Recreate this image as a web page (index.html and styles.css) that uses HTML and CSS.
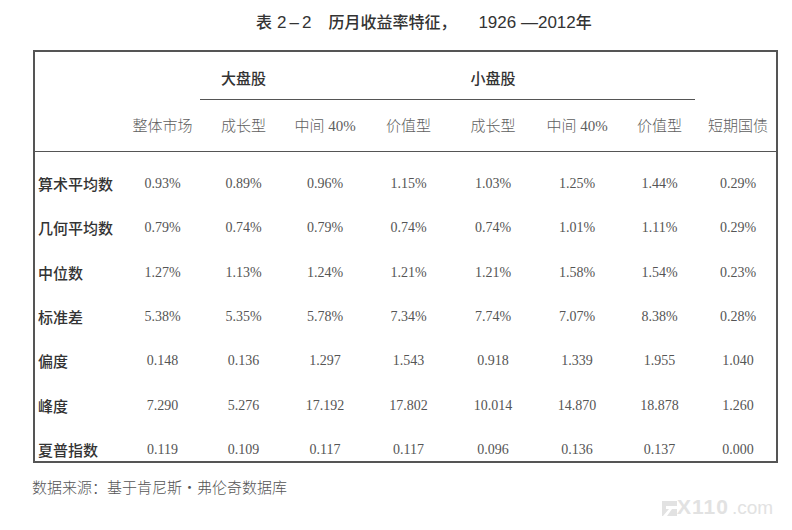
FILE: index.html
```html
<!DOCTYPE html>
<html lang="zh-CN">
<head>
<meta charset="utf-8">
<title>表 2-2 历月收益率特征</title>
<link rel="stylesheet" href="styles.css">
</head>
<body>
<div class="page">
  <h1 class="title"><span class="t-cn">表</span><span class="t-num t-no">2–2</span><span class="t-cn t-main">历月收益率特征，</span><span class="t-num t-yr">1926 —2012</span><span class="t-cn">年</span></h1>

  <div class="table">
    <div class="row group-row">
      <div class="group g-large">大盘股</div>
      <div class="group g-small">小盘股</div>
    </div>
    <div class="group-line"></div>
    <div class="row head-row">
      <div class="cell"></div>
      <div class="cell hd">整体市场</div>
      <div class="cell hd">成长型</div>
      <div class="cell hd">中间 40%</div>
      <div class="cell hd">价值型</div>
      <div class="cell hd">成长型</div>
      <div class="cell hd">中间 40%</div>
      <div class="cell hd">价值型</div>
      <div class="cell hd">短期国债</div>
    </div>
    <div class="body">
      <div class="row data-row">
        <div class="cell label">算术平均数</div>
        <div class="cell num">0.93%</div><div class="cell num">0.89%</div><div class="cell num">0.96%</div><div class="cell num">1.15%</div>
        <div class="cell num">1.03%</div><div class="cell num">1.25%</div><div class="cell num">1.44%</div><div class="cell num">0.29%</div>
      </div>
      <div class="row data-row">
        <div class="cell label">几何平均数</div>
        <div class="cell num">0.79%</div><div class="cell num">0.74%</div><div class="cell num">0.79%</div><div class="cell num">0.74%</div>
        <div class="cell num">0.74%</div><div class="cell num">1.01%</div><div class="cell num">1.11%</div><div class="cell num">0.29%</div>
      </div>
      <div class="row data-row">
        <div class="cell label">中位数</div>
        <div class="cell num">1.27%</div><div class="cell num">1.13%</div><div class="cell num">1.24%</div><div class="cell num">1.21%</div>
        <div class="cell num">1.21%</div><div class="cell num">1.58%</div><div class="cell num">1.54%</div><div class="cell num">0.23%</div>
      </div>
      <div class="row data-row">
        <div class="cell label">标准差</div>
        <div class="cell num">5.38%</div><div class="cell num">5.35%</div><div class="cell num">5.78%</div><div class="cell num">7.34%</div>
        <div class="cell num">7.74%</div><div class="cell num">7.07%</div><div class="cell num">8.38%</div><div class="cell num">0.28%</div>
      </div>
      <div class="row data-row">
        <div class="cell label">偏度</div>
        <div class="cell num">0.148</div><div class="cell num">0.136</div><div class="cell num">1.297</div><div class="cell num">1.543</div>
        <div class="cell num">0.918</div><div class="cell num">1.339</div><div class="cell num">1.955</div><div class="cell num">1.040</div>
      </div>
      <div class="row data-row">
        <div class="cell label">峰度</div>
        <div class="cell num">7.290</div><div class="cell num">5.276</div><div class="cell num">17.192</div><div class="cell num">17.802</div>
        <div class="cell num">10.014</div><div class="cell num">14.870</div><div class="cell num">18.878</div><div class="cell num">1.260</div>
      </div>
      <div class="row data-row last">
        <div class="cell label">夏普指数</div>
        <div class="cell num">0.119</div><div class="cell num">0.109</div><div class="cell num">0.117</div><div class="cell num">0.117</div>
        <div class="cell num">0.096</div><div class="cell num">0.136</div><div class="cell num">0.137</div><div class="cell num">0.000</div>
      </div>
    </div>
  </div>

  <p class="source">数据来源：基于肯尼斯・弗伦奇数据库</p>
</div>

<div class="watermark">
  <svg class="wm-f" width="15" height="15" viewBox="0 0 15 15" aria-hidden="true">
    <rect x="0" y="0" width="15" height="15" fill="#e2e2e2"/>
    <polygon points="4,5 15,5 15,8 10,8 5,15 1,15 7,8 4,8" fill="#ffffff"/>
  </svg>
  <span class="wm-x">X110</span><span class="wm-com">.com</span>
</div>
</body>
</html>
```

FILE: styles.css
```css
html, body {
  margin: 0;
  padding: 0;
}

body {
  width: 792px;
  height: 530px;
  background: #ffffff;
  position: relative;
  overflow: hidden;
  color: #333333;
  font-family: "Liberation Serif", "Noto Sans CJK SC", serif;
}

.page {
  padding: 10px 0 0 33px;
}

/* Title */
.title {
  margin: 0;
  padding-left: 223px;
  height: 22px;
  line-height: 22px;
  font-size: 16px;
  font-weight: normal;
  white-space: nowrap;
  color: #333333;
}

.t-cn {
  font-family: "Noto Sans CJK SC", sans-serif;
  font-weight: 500;
  font-size: 16px;
}

.t-num {
  font-family: "Liberation Sans", "Noto Sans CJK SC", sans-serif;
  font-size: 17px;
}

.t-no {
  margin-left: 5px;
  letter-spacing: 3px;
}

.t-main {
  margin-left: 14px;
}

.t-yr {
  margin-left: 22px;
}

/* Table */
.table {
  margin-top: 18px;
  width: 741px;
  border: 2px solid #555555;
}

.row {
  display: grid;
  grid-template-columns: 87px 81px 81px 82px 85px 84px 84px 81px 76px;
}

.group-row {
  box-sizing: border-box;
  height: 47px;
  padding-top: 4px;
  align-items: center;
}

.group {
  font-family: "Noto Sans CJK SC", sans-serif;
  font-weight: 500;
  font-size: 15px;
  color: #333333;
  text-align: center;
}

.g-large {
  grid-column: 3;
}

.g-small {
  grid-column: 6;
}

.group-line {
  margin-left: 165px;
  width: 495px;
  height: 1px;
  background: #555555;
}

.head-row {
  box-sizing: border-box;
  height: 52px;
  align-items: center;
  border-bottom: 1px solid #555555;
}

.hd {
  text-align: center;
  font-size: 15px;
  color: #5e5e5e;
  font-family: "Liberation Serif", "Noto Sans CJK SC", serif;
  font-weight: 300;
  white-space: nowrap;
}

.body {
  padding-top: 10px;
}

.data-row {
  height: 44.33px;
  align-items: start;
}

.data-row.last {
  height: 33px;
}

.cell {
  line-height: 20px;
}

.data-row .cell {
  padding-top: 12px;
}

.label {
  padding-left: 3px;
  font-family: "Noto Sans CJK SC", sans-serif;
  font-weight: 500;
  font-size: 15px;
  color: #333333;
  white-space: nowrap;
}

.num {
  text-align: center;
  font-family: "Liberation Serif", serif;
  font-size: 14px;
  color: #555555;
}

/* Source note */
.source {
  margin: 14px 0 0 -1px;
  line-height: 20px;
  font-size: 15px;
  color: #555555;
  font-family: "Noto Sans CJK SC", sans-serif;
  font-weight: 300;
}

/* Watermark */
.watermark {
  position: absolute;
  left: 662px;
  top: 495px;
  display: flex;
  align-items: baseline;
  color: #e2e2e2;
  font-family: "Liberation Sans", sans-serif;
  white-space: nowrap;
}

.wm-f {
  align-self: center;
  margin-top: 2px;
}

.wm-x {
  font-size: 21px;
  font-weight: 700;
  letter-spacing: 1px;
}

.wm-com {
  font-size: 19px;
  margin-left: 3px;
}
```
